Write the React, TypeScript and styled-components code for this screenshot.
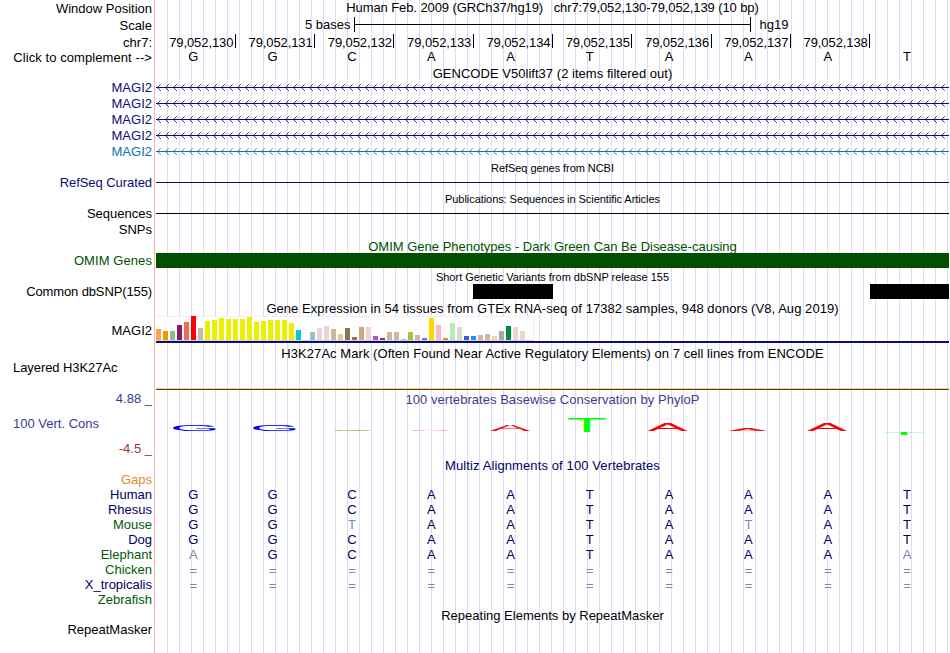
import React, { FunctionComponent } from 'react';
import styled, { createGlobalStyle } from 'styled-components';

const NAVY = '#0c0c78';
const SPECIES_BLUE = '#000064';
const GREEN = '#005000';
const FADED = '#8282b4';

const TRACK_WIDTH = 793;

const GlobalStyle = createGlobalStyle`
  body {
    margin: 0;
    background: #fff;
  }
`;

interface TextProps {
  $color?: string;
  $drop?: number;
  $spacing?: number;
}

const Browser = styled.main`
  width: 949px;
  height: 653px;
  overflow: hidden;
  font-family: 'Liberation Sans', Arial, sans-serif;
  font-size: 13px;
  line-height: 15px;
  color: #000;
  white-space: pre;
  background:
    linear-gradient(#ffb4b4, #ffb4b4) 154px 0 / 1px 100% no-repeat,
    repeating-linear-gradient(to right, #dcdcf8 0 1px, transparent 1px 12px) 167px 0 / 782px 100% no-repeat;
`;

const Row = styled.div<{ $height: number }>`
  display: flex;
  height: ${({ $height }) => $height}px;
`;

const Label = styled.div<TextProps & { $left?: boolean }>`
  flex: none;
  box-sizing: border-box;
  width: 152px;
  margin-right: 4px;
  padding-top: ${({ $drop = 0 }) => $drop}px;
  padding-left: 13px;
  text-align: ${({ $left }) => ($left ? 'left' : 'right')};
  color: ${({ $color = '#000' }) => $color};
  letter-spacing: ${({ $spacing = 0 }) => $spacing}px;
`;

const Track = styled.div`
  flex: none;
  width: ${TRACK_WIDTH}px;
`;

const Title = styled.div<TextProps & { $small?: boolean }>`
  padding-top: ${({ $drop = 1 }) => $drop}px;
  text-align: center;
  font-size: ${({ $small }) => ($small ? 11 : 13)}px;
  color: ${({ $color = '#000' }) => $color};
  letter-spacing: ${({ $spacing = 0 }) => $spacing}px;
`;

const Line = styled.div<{ $color: string }>`
  height: 1px;
  margin-top: 7px;
  background: ${({ $color }) => $color};
`;

const Bases = styled.div`
  display: grid;
  grid-template-columns: repeat(10, 79.3px);
  margin-left: -2.3px;
  text-align: center;
`;

const Base = styled.span<{ $color: string; $drop?: number }>`
  padding-top: ${({ $drop = 0 }) => $drop}px;
  color: ${({ $color }) => $color};
`;

const Ruler = styled.div`
  display: grid;
  grid-template-columns: repeat(10, 79.3px);
  padding-top: 1px;
  margin-left: 0.5px;
`;

const Position = styled.div`
  box-sizing: border-box;
  height: 14px;
  padding: 1px 1.5px 0 0;
  border-right: 1px solid #000;
  text-align: right;
  letter-spacing: -0.1px;
`;

const ScaleBar = styled.div`
  display: flex;
  padding: 1px 0 0 149px;
`;

const ScaleRule = styled.div`
  box-sizing: border-box;
  width: 397px;
  height: 15px;
  margin: 0 9px 0 3px;
  border: solid #000;
  border-width: 0 1px;
  background: linear-gradient(#000, #000) 0 7px / 100% 1px no-repeat;
`;

const Block = styled.div<{ $width?: number }>`
  width: ${({ $width = TRACK_WIDTH }) => $width}px;
  height: 15px;
  background: ${({ $width }) => ($width ? '#000' : GREEN)};
`;

const Variants = styled.div`
  display: flex;
  justify-content: space-between;
  padding-left: 317px;
`;

const Expression = styled.div`
  padding-top: 1px;
  border-bottom: 2px solid ${NAVY};
`;

const ExpressionBars = styled.div`
  box-sizing: border-box;
  display: flex;
  align-items: flex-end;
  gap: 2px;
  width: 378px;
  height: 25px;
  background: #fff;
  box-shadow: inset 0 1px #f0f0f0, inset -1px 0 #f0f0f0;
  border-bottom: 1px solid #d2d2d2;
`;

const Tissue = styled.div<{ $color: string; $height: number }>`
  width: 5px;
  height: ${({ $height }) => $height}px;
  background: ${({ $color }) => $color};
`;

const Histone = styled.div`
  box-sizing: border-box;
  height: 30px;
  border-bottom: 1px solid #464632;
  box-shadow: inset 0 -1px #ffc864;
`;

const ConsLabels = styled(Label)`
  display: flex;
  flex-direction: column;
  gap: 10px;
`;

const ConsLabel = styled.span<{ $color: string; $left?: boolean }>`
  color: ${({ $color }) => $color};
  text-align: ${({ $left }) => ($left ? 'left' : 'right')};
`;

const Drawing = styled.svg`
  display: block;
`;

const POSITIONS = [130, 131, 132, 133, 134, 135, 136, 137, 138];

// [color, height] for each of the 54 GTEx tissues
const TISSUES: [string, number][] = [
  ['#ffa54f', 11], ['#ee9a00', 9], ['#8fbc8f', 9], ['#8b1c62', 15], ['#ee6a50', 18], ['#ff0000', 24],
  ['#cdb79e', 12], ['#eeee00', 19], ['#eeee00', 20], ['#eeee00', 22], ['#eeee00', 21], ['#eeee00', 21],
  ['#eeee00', 21], ['#eeee00', 23], ['#eeee00', 18], ['#eeee00', 19], ['#eeee00', 20], ['#eeee00', 20],
  ['#eeee00', 20], ['#eeee00', 17], ['#00cdcd', 10], ['#ee82ee', 0], ['#9ac0cd', 8], ['#eed5d2', 12],
  ['#eed5d2', 14], ['#cdb79e', 11], ['#eec591', 6], ['#8b7355', 12], ['#8b7355', 3], ['#cdaa7d', 13],
  ['#eed5d2', 13], ['#b452cd', 4], ['#7a378b', 2], ['#cdb79e', 8], ['#cdb79e', 8], ['#cdb79e', 1],
  ['#9acd32', 8], ['#cdb79e', 5], ['#7a67ee', 2], ['#ffd700', 22], ['#ffb6c1', 15], ['#cd9b1d', 2],
  ['#b4eeb4', 17], ['#d9d9d9', 13], ['#3a5fcd', 4], ['#1e90ff', 4], ['#cdb79e', 5], ['#cdb79e', 6],
  ['#ffd39b', 4], ['#a6a6a6', 9], ['#008b45', 14], ['#eed5d2', 13], ['#eed5d2', 9], ['#ff00ff', 0],
];

// Left edge and width of each capital, in em
const INK: Record<string, [number, number]> = {
  A: [0.002, 0.663],
  C: [0.05, 0.635],
  G: [0.05, 0.667],
  T: [0.022, 0.568],
};
const CAP_HEIGHT = 0.688;

interface LogoLetter {
  base: string;
  x: number;
  width: number;
  y: number;
  height: number;
  color: string;
}

const LOGO: LogoLetter[] = [
  { base: 'G', x: 17, width: 43, y: 35, height: 6, color: '#0000ff' },
  { base: 'G', x: 97, width: 43, y: 35, height: 6, color: '#0000ff' },
  { base: 'C', x: 177, width: 39, y: 39.7, height: 1.4, color: '#8c8c00' },
  { base: 'A', x: 254, width: 39, y: 39.7, height: 1.3, color: '#ff0000' },
  { base: 'A', x: 334, width: 40, y: 35, height: 6, color: '#ff0000' },
  { base: 'T', x: 412, width: 38, y: 28, height: 14, color: '#00ff00' },
  { base: 'A', x: 491.5, width: 40, y: 33, height: 8, color: '#ff0000' },
  { base: 'A', x: 572, width: 39, y: 38, height: 3, color: '#ff0000' },
  { base: 'A', x: 651, width: 40, y: 33, height: 8, color: '#ff0000' },
  { base: 'T', x: 729, width: 38, y: 42, height: 3, color: '#00ff00' },
];

const SPECIES = [
  { name: 'Human', color: SPECIES_BLUE, bases: 'GGCAATAAAT' },
  { name: 'Rhesus', color: SPECIES_BLUE, bases: 'GGCAATAAAT' },
  { name: 'Mouse', color: '#005a0a', bases: 'GGTAATATAT' },
  { name: 'Dog', color: SPECIES_BLUE, bases: 'GGCAATAAAT' },
  { name: 'Elephant', color: '#005a0a', bases: 'AGCAATAAAA' },
  { name: 'Chicken', color: '#005a0a', bases: '==========' },
  { name: 'X_tropicalis', color: SPECIES_BLUE, bases: '==========' },
  { name: 'Zebrafish', color: '#005a0a', bases: '' },
];

const HUMAN = SPECIES[0].bases;

const GENES = [NAVY, NAVY, NAVY, NAVY, '#0c72b0'];

const Intron: FunctionComponent<{ color: string }> = ({ color }) => {
  const arrows = Array.from({ length: 99 }, (_, i) => `M${i * 8 + 4.7} 4.3l-3.2 3.2l3.2 3.2`).join('');
  return (
    <Drawing width={TRACK_WIDTH} height="16" fill="none" stroke={color}>
      <path d={`M0 7.5H${TRACK_WIDTH}`} />
      <path d={arrows} strokeWidth="0.85" />
    </Drawing>
  );
};

const Logo: FunctionComponent = () => (
  <Drawing width={TRACK_WIDTH} height="50" viewBox={`0 17 ${TRACK_WIDTH} 50`}>
    {LOGO.map(({ base, x, width, y, height, color }) => {
      const [left, ink] = INK[base];
      const scaleX = width / (ink * 100);
      const scaleY = height / (CAP_HEIGHT * 100);
      return (
        <text
          key={x}
          fontSize="100"
          fill={color}
          transform={`translate(${x - left * 100 * scaleX} ${y + height}) scale(${scaleX} ${scaleY})`}
        >
          {base}
        </text>
      );
    })}
  </Drawing>
);

interface TitleRowProps {
  text: string;
  color?: string;
  small?: boolean;
  height?: number;
  drop?: number;
  spacing?: number;
}

const TitleRow: FunctionComponent<TitleRowProps> = ({ text, color, small, height = 15, drop, spacing }) => (
  <Row $height={height}>
    <Label />
    <Track>
      <Title $color={color} $small={small} $drop={drop} $spacing={spacing}>{text}</Title>
    </Track>
  </Row>
);

const App: FunctionComponent = () => {
  return (
    <>
      <GlobalStyle />
      <Browser>
        <Row $height={16}>
          <Label $drop={1}>Window Position</Label>
          <Track>
            <Title $drop={0} $spacing={-0.09}>
              {'Human Feb. 2009 (GRCh37/hg19)   chr7:79,052,130-79,052,139 (10 bp)'}
            </Title>
          </Track>
        </Row>
        <Row $height={17}>
          <Label $drop={2}>Scale</Label>
          <Track>
            <ScaleBar>
              5 bases
              <ScaleRule />
              hg19
            </ScaleBar>
          </Track>
        </Row>
        <Row $height={16}>
          <Label $drop={2}>chr7:</Label>
          <Track>
            <Ruler>
              {POSITIONS.map((position) => (
                <Position key={position}>79,052,{position}</Position>
              ))}
            </Ruler>
          </Track>
        </Row>
        <Row $height={16}>
          <Label $drop={1} $spacing={0.08}>{'Click to complement -->'}</Label>
          <Track>
            <Bases>
              {HUMAN.split('').map((base, i) => (
                <Base key={i} $color="#000">{base}</Base>
              ))}
            </Bases>
          </Track>
        </Row>

        <TitleRow spacing={0.03} text="GENCODE V50lift37 (2 items filtered out)" />
        {GENES.map((color, i) => (
          <Row key={i} $height={16}>
            <Label $color={color}>MAGI2</Label>
            <Track>
              <Intron color={color} />
            </Track>
          </Row>
        ))}

        <TitleRow small spacing={-0.06} text="RefSeq genes from NCBI" />
        <Row $height={16}>
          <Label $color={NAVY} $spacing={-0.07}>RefSeq Curated</Label>
          <Track>
            <Line $color={NAVY} />
          </Track>
        </Row>

        <TitleRow small spacing={-0.06} text="Publications: Sequences in Scientific Articles" />
        <Row $height={16}>
          <Label>Sequences</Label>
          <Track>
            <Line $color="#000" />
          </Track>
        </Row>
        <Row $height={16}>
          <Label>SNPs</Label>
        </Row>

        <TitleRow color={GREEN} text="OMIM Gene Phenotypes - Dark Green Can Be Disease-causing" />
        <Row $height={16}>
          <Label $color={GREEN} $spacing={0.08}>OMIM Genes</Label>
          <Track>
            <Block />
          </Track>
        </Row>

        <TitleRow small text="Short Genetic Variants from dbSNP release 155" />
        <Row $height={16}>
          <Label $spacing={-0.12}>Common dbSNP(155)</Label>
          <Track>
            <Variants>
              <Block $width={80} />
              <Block $width={79} />
            </Variants>
          </Track>
        </Row>

        <TitleRow
          spacing={0.055}
          text="Gene Expression in 54 tissues from GTEx RNA-seq of 17382 samples, 948 donors (V8, Aug 2019)"
        />
        <Row $height={28}>
          <Label $drop={8}>MAGI2</Label>
          <Track>
            <Expression>
              <ExpressionBars>
                {TISSUES.map(([color, height], i) => (
                  <Tissue key={i} $color={color} $height={height} />
                ))}
              </ExpressionBars>
            </Expression>
          </Track>
        </Row>

        <TitleRow
          height={17}
          drop={3}
          spacing={0.055}
          text="H3K27Ac Mark (Often Found Near Active Regulatory Elements) on 7 cell lines from ENCODE"
        />
        <Row $height={30}>
          <Label $left $spacing={-0.07}>Layered H3K27Ac</Label>
          <Track>
            <Histone />
          </Track>
        </Row>

        <Row $height={67}>
          <ConsLabels $drop={1}>
            <ConsLabel $color="#3c3c8c">4.88 _</ConsLabel>
            <ConsLabel $color="#3c3c8c" $left>100 Vert. Cons</ConsLabel>
            <ConsLabel $color="#8c3c3c">-4.5 _</ConsLabel>
          </ConsLabels>
          <Track>
            <Title $color="#3c3c8c" $drop={2} $spacing={0.04}>100 vertebrates Basewise Conservation by PhyloP</Title>
            <Logo />
          </Track>
        </Row>

        <TitleRow color={SPECIES_BLUE} spacing={0.11} text="Multiz Alignments of 100 Vertebrates" />
        <Row $height={15}>
          <Label $color="#e08c14">Gaps</Label>
        </Row>
        {SPECIES.map(({ name, color, bases }) => (
          <Row key={name} $height={15}>
            <Label $color={color}>{name}</Label>
            <Track>
              <Bases>
                {bases.split('').map((base, i) => (
                  <Base key={i} $color={base === HUMAN[i] ? SPECIES_BLUE : FADED} $drop={base === '=' ? 1 : 0}>
                    {base}
                  </Base>
                ))}
              </Bases>
            </Track>
          </Row>
        ))}

        <TitleRow text="Repeating Elements by RepeatMasker" />
        <Row $height={16}>
          <Label>RepeatMasker</Label>
        </Row>
      </Browser>
    </>
  );
};

export default App;
